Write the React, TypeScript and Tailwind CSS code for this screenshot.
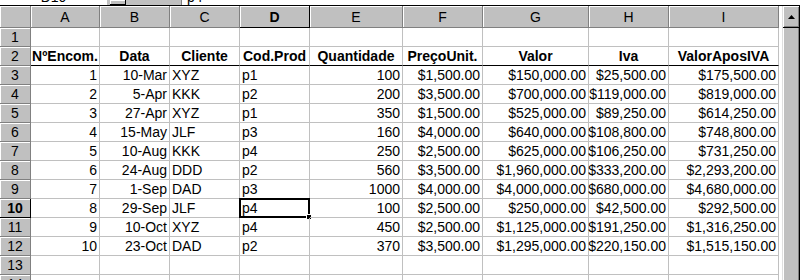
import React from "react";

const cols = [
  { key: "A", w: "w-[69px]", align: "justify-end pr-[2px]" },
  { key: "B", w: "w-[70px]", align: "justify-end pr-[2px]" },
  { key: "C", w: "w-[70px]", align: "justify-start pl-[2px]" },
  { key: "D", w: "w-[70px]", align: "justify-start pl-[2px]" },
  { key: "E", w: "w-[93px]", align: "justify-end pr-[2px]" },
  { key: "F", w: "w-[80px]", align: "justify-end pr-[2px]" },
  { key: "G", w: "w-[106px]", align: "justify-end pr-[2px]" },
  { key: "H", w: "w-[80px]", align: "justify-end pr-[2px]" },
  { key: "I", w: "w-[110px]", align: "justify-end pr-[2px]" },
];

const headings = ["NºEncom.", "Data", "Cliente", "Cod.Prod", "Quantidade", "PreçoUnit.", "Valor", "Iva", "ValorAposIVA"];

const data = [
  ["1", "10-Mar", "XYZ", "p1", "100", "$1,500.00", "$150,000.00", "$25,500.00", "$175,500.00"],
  ["2", "5-Apr", "KKK", "p2", "200", "$3,500.00", "$700,000.00", "$119,000.00", "$819,000.00"],
  ["3", "27-Apr", "XYZ", "p1", "350", "$1,500.00", "$525,000.00", "$89,250.00", "$614,250.00"],
  ["4", "15-May", "JLF", "p3", "160", "$4,000.00", "$640,000.00", "$108,800.00", "$748,800.00"],
  ["5", "10-Aug", "KKK", "p4", "250", "$2,500.00", "$625,000.00", "$106,250.00", "$731,250.00"],
  ["6", "24-Aug", "DDD", "p2", "560", "$3,500.00", "$1,960,000.00", "$333,200.00", "$2,293,200.00"],
  ["7", "1-Sep", "DAD", "p3", "1000", "$4,000.00", "$4,000,000.00", "$680,000.00", "$4,680,000.00"],
  ["8", "29-Sep", "JLF", "p4", "100", "$2,500.00", "$250,000.00", "$42,500.00", "$292,500.00"],
  ["9", "10-Oct", "XYZ", "p4", "450", "$2,500.00", "$1,125,000.00", "$191,250.00", "$1,316,250.00"],
  ["10", "23-Oct", "DAD", "p2", "370", "$3,500.00", "$1,295,000.00", "$220,150.00", "$1,515,150.00"],
];

function RowHeader({ n }: { n: number }) {
  const active = n === 10;
  return (
    <div
      className={
        "w-[31px] h-[19px] shrink-0 flex items-center justify-center bg-[#c0c0c0] shadow-[inset_1px_1px_0_#ffffff] border-r border-b " +
        (active ? "border-black font-bold" : "border-[#808080]")
      }
    >
      {n}
    </div>
  );
}

function Row({ n }: { n: number }) {
  let cells: string[] = ["", "", "", "", "", "", "", "", ""];
  if (n === 2) cells = headings;
  if (n >= 3 && n <= 12) cells = data[n - 3];
  return (
    <div className="flex h-[19px]">
      <RowHeader n={n} />
      {cols.map((c, i) => {
        const selected = n === 10 && c.key === "D";
        return (
          <div
            key={c.key}
            className={
              "relative h-[19px] shrink-0 flex items-center whitespace-nowrap overflow-visible border-r border-b border-[#c0c0c0] " +
              c.w +
              " " +
              (n === 2 ? "justify-center font-bold border-b-black" : c.align)
            }
          >
            {cells[i]}
            {selected && (
              <>
                <div className="absolute -left-[1px] -top-[1px] -right-[1px] -bottom-[1px] border-2 border-black" />
                <div className="absolute -right-[3px] -bottom-[3px] w-[6px] h-[6px] bg-black border border-white" />
              </>
            )}
          </div>
        );
      })}
    </div>
  );
}

export default function App() {
  return (
    <div className="w-[800px] h-[280px] overflow-hidden bg-white text-black text-[14px] leading-[16px] font-['Liberation_Sans',Arial,sans-serif]">
      {/* formula bar, mostly scrolled out of view */}
      <div className="flex h-[6px] overflow-hidden border-b border-black">
        <div className="w-[107px] flex items-end justify-center bg-white">
          <span className="h-[16px] leading-[16px]">D10</span>
        </div>
        <div className="w-[3px] bg-[#c0c0c0]" />
        <div className="w-[16px] bg-[#c0c0c0] border-r border-b border-black shadow-[inset_1px_1px_0_#ffffff]" />
        <div className="w-[56px] bg-[#c0c0c0] border-r border-[#808080]" />
        <div className="flex-1 flex items-end pl-[5px] bg-white">
          <span className="h-[16px] leading-[16px]">p4</span>
        </div>
      </div>

      <div className="flex">
        <div className="w-[779px] shrink-0">
          {/* column headers */}
          <div className="flex h-[22px]">
            <div className="w-[31px] h-[22px] shrink-0 bg-[#c0c0c0] shadow-[inset_1px_1px_0_#ffffff] border-r border-b border-[#808080]" />
            {cols.map((c) => (
              <div
                key={c.key}
                className={
                  "h-[22px] shrink-0 flex items-center justify-center bg-[#c0c0c0] shadow-[inset_1px_1px_0_#ffffff] border-r border-b " +
                  c.w +
                  " " +
                  (c.key === "D" ? "border-black font-bold" : "border-[#808080]")
                }
              >
                {c.key}
              </div>
            ))}
          </div>
          {Array.from({ length: 14 }, (_, i) => (
            <Row key={i} n={i + 1} />
          ))}
        </div>

        <div className="w-[3px] shrink-0 bg-white" />

        {/* vertical scrollbar */}
        <div className="w-[18px] shrink-0 flex flex-col bg-[#c0c0c0] border-l border-[#dfdfdf]">
          <div className="h-[22px] flex items-center justify-center bg-[#c0c0c0] border-r border-b border-black shadow-[inset_1px_1px_0_#ffffff,inset_-1px_-1px_0_#808080]">
            <svg width="7" height="4" viewBox="0 0 7 4">
              <path d="M3.5 0 L7 4 L0 4 Z" fill="#000" />
            </svg>
          </div>
          <div className="flex-1 bg-[#c0c0c0] border-r border-black shadow-[inset_1px_0_0_#ffffff,inset_-1px_0_0_#808080]" />
        </div>
      </div>
    </div>
  );
}
